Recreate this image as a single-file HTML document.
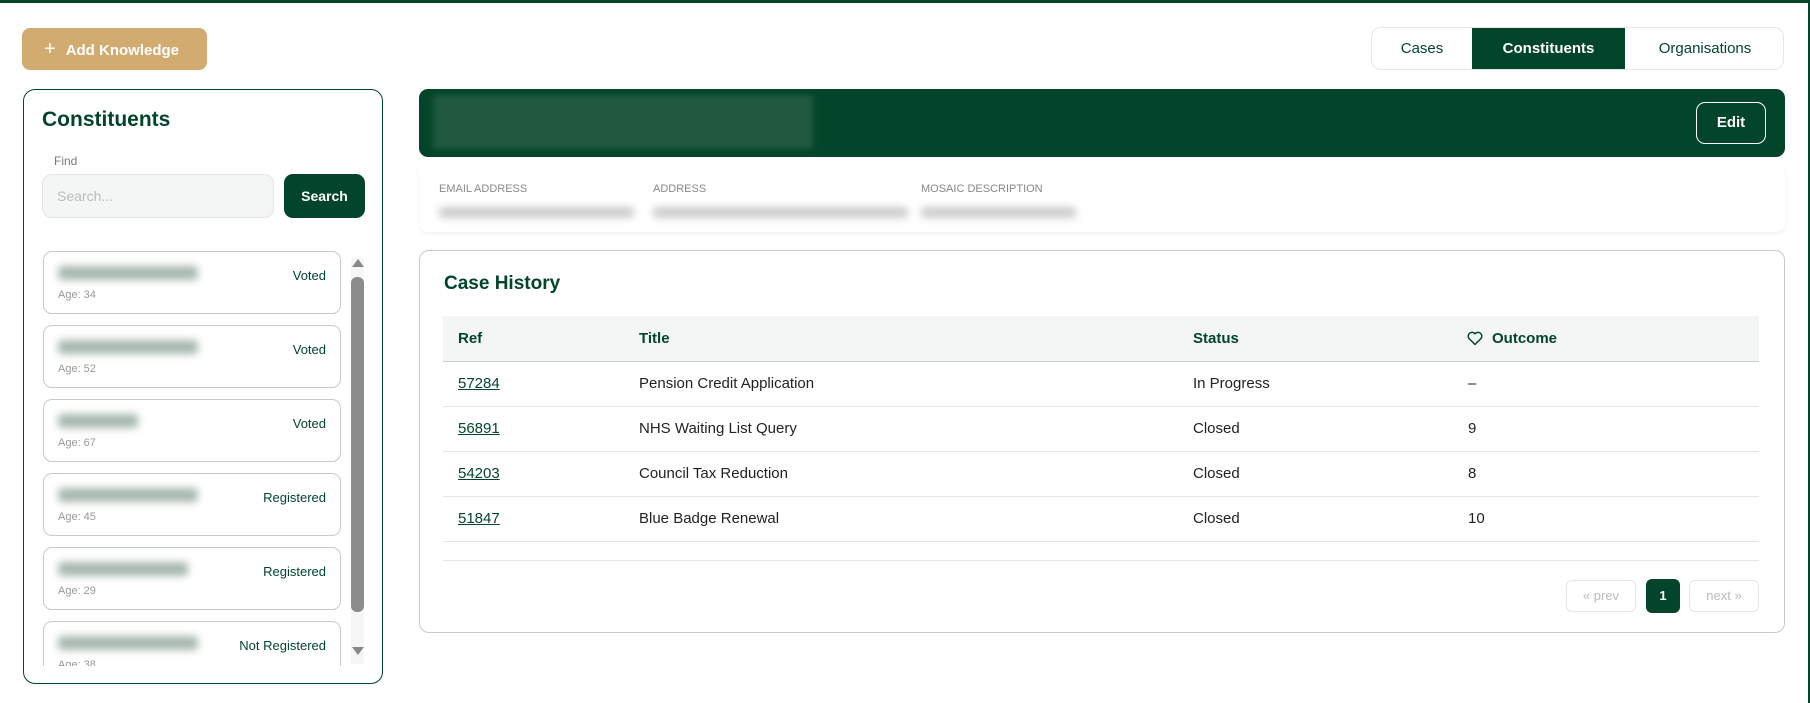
<!DOCTYPE html>
<html><head><style>
*{box-sizing:border-box;margin:0;padding:0}
body{width:1810px;height:703px;background:#fff;font-family:"Liberation Sans",sans-serif;position:relative;overflow:hidden;color:#222}
.a{position:absolute}
.g{color:#03452a}
.blur{position:absolute;background:#a8b8ae;filter:blur(4px);border-radius:4px}
.item{position:absolute;left:43px;width:298px;height:63px;border:1px solid #c4ccc8;border-radius:9px;background:#fff}
.item .st{position:absolute;right:14px;top:16px;font-size:13px;color:#03452a}
.item .age{position:absolute;left:14px;top:37px;font-size:11px;color:#999}
.row{position:absolute;left:443px;width:1316px;height:45px;border-bottom:1px solid #e2e6e4;font-size:15px}
.row span{position:absolute;top:13px}
</style></head><body>
<div class="a" style="left:0;top:0;width:1810px;height:3px;background:#03452a"></div>
<div class="a" style="right:0;top:0;width:2px;height:703px;background:#03452a"></div>

<div class="a" style="left:22px;top:28px;width:185px;height:42px;background:#d2ab70;border-radius:8px;color:#fff;font-weight:bold;font-size:15px;line-height:42px;padding-left:22px"><span style="font-weight:normal;font-size:20px;margin-right:10px">+</span>Add Knowledge</div>

<div class="a" style="left:1371px;top:27px;width:413px;height:43px;border:1px solid #e4e8e6;border-radius:10px;font-size:15px;line-height:41px;overflow:hidden">
<div class="a g" style="left:0;width:100px;text-align:center">Cases</div>
<div class="a" style="left:100px;width:153px;height:43px;background:#03452a;color:#fff;font-weight:bold;text-align:center">Constituents</div>
<div class="a g" style="left:253px;width:160px;text-align:center">Organisations</div>
</div>

<div class="a" style="left:23px;top:89px;width:360px;height:595px;border:1.5px solid #03452a;border-radius:12px"></div>
<div class="a g" style="left:42px;top:108px;font-size:21px;font-weight:bold">Constituents</div>
<div class="a" style="left:54px;top:154px;font-size:12px;color:#777">Find</div>
<div class="a" style="left:42px;top:174px;width:232px;height:44px;background:#f4f6f5;border:1px solid #e2e6e4;border-radius:10px;font-size:14px;color:#bbb;line-height:42px;padding-left:14px">Search...</div>
<div class="a" style="left:284px;top:174px;width:81px;height:44px;background:#03452a;border-radius:9px;color:#fff;font-weight:bold;font-size:14px;line-height:44px;text-align:center">Search</div>

<div class="a" style="left:40px;top:250px;width:330px;height:416px;overflow:hidden">
<div style="position:absolute;left:-40px;top:-250px;width:400px;height:700px">
<div class="item" style="top:251px"><div class="blur" style="left:14px;top:14px;width:140px;height:14px"></div><div class="st">Voted</div><div class="age">Age: 34</div></div>
<div class="item" style="top:325px"><div class="blur" style="left:14px;top:14px;width:140px;height:14px"></div><div class="st">Voted</div><div class="age">Age: 52</div></div>
<div class="item" style="top:399px"><div class="blur" style="left:14px;top:14px;width:80px;height:14px"></div><div class="st">Voted</div><div class="age">Age: 67</div></div>
<div class="item" style="top:473px"><div class="blur" style="left:14px;top:14px;width:140px;height:14px"></div><div class="st">Registered</div><div class="age">Age: 45</div></div>
<div class="item" style="top:547px"><div class="blur" style="left:14px;top:14px;width:130px;height:14px"></div><div class="st">Registered</div><div class="age">Age: 29</div></div>
<div class="item" style="top:621px"><div class="blur" style="left:14px;top:14px;width:140px;height:14px"></div><div class="st">Not Registered</div><div class="age">Age: 38</div></div>
</div></div>
<div class="a" style="left:351px;top:258px;width:13px;height:406px;background:#f6f6f6"></div>
<div class="a" style="left:352px;top:259px;width:0;height:0;border-left:6px solid transparent;border-right:6px solid transparent;border-bottom:8px solid #888"></div>
<div class="a" style="left:351px;top:277px;width:13px;height:335px;background:#8c8c8c;border-radius:6px"></div>
<div class="a" style="left:352px;top:647px;width:0;height:0;border-left:6px solid transparent;border-right:6px solid transparent;border-top:8px solid #888"></div>

<div class="a" style="left:419px;top:89px;width:1366px;height:68px;background:#03452a;border-radius:9px"></div>
<div class="a" style="left:433px;top:95px;width:380px;height:54px;background:#2d6248;filter:blur(3px);opacity:.7"></div>
<div class="a" style="left:1696px;top:102px;width:70px;height:42px;border:1px solid #fff;border-radius:9px;color:#fff;font-weight:bold;font-size:15px;line-height:40px;text-align:center">Edit</div>

<div class="a" style="left:419px;top:165px;width:1366px;height:67px;background:#fff;border-radius:9px;box-shadow:0 2px 4px rgba(0,0,0,.06)"></div>
<div class="a" style="left:439px;top:183px;font-size:11px;color:#888">EMAIL ADDRESS</div>
<div class="a" style="left:653px;top:183px;font-size:11px;color:#888">ADDRESS</div>
<div class="a" style="left:921px;top:183px;font-size:11px;color:#888">MOSAIC DESCRIPTION</div>
<div class="blur" style="left:439px;top:207px;width:195px;height:11px;background:#ccc"></div>
<div class="blur" style="left:653px;top:207px;width:255px;height:11px;background:#ccc"></div>
<div class="blur" style="left:921px;top:207px;width:155px;height:11px;background:#ccc"></div>

<div class="a" style="left:419px;top:250px;width:1366px;height:383px;border:1px solid #c4ccc8;border-radius:10px"></div>
<div class="a g" style="left:444px;top:273px;font-size:19px;font-weight:bold">Case History</div>
<div class="a" style="left:443px;top:316px;width:1316px;height:46px;background:#f4f6f5;border-bottom:1px solid #c9cfcc;font-size:15px;font-weight:bold;color:#03452a">
<span class="a" style="left:15px;top:14px">Ref</span><span class="a" style="left:196px;top:14px">Title</span><span class="a" style="left:750px;top:14px">Status</span>
<svg class="a" style="left:1024px;top:15px" width="16" height="15" viewBox="0 0 24 22"><path d="M12 20 L3 11 A5 5 0 0 1 12 4 A5 5 0 0 1 21 11 Z" fill="none" stroke="#03452a" stroke-width="2.2" stroke-linejoin="round"/></svg>
<span class="a" style="left:1049px;top:14px">Outcome</span></div>
<div class="row" style="top:362px"><span class="g" style="left:15px;text-decoration:underline">57284</span><span style="left:196px">Pension Credit Application</span><span style="left:750px">In Progress</span><span style="left:1025px">–</span></div>
<div class="row" style="top:407px"><span class="g" style="left:15px;text-decoration:underline">56891</span><span style="left:196px">NHS Waiting List Query</span><span style="left:750px">Closed</span><span style="left:1025px">9</span></div>
<div class="row" style="top:452px"><span class="g" style="left:15px;text-decoration:underline">54203</span><span style="left:196px">Council Tax Reduction</span><span style="left:750px">Closed</span><span style="left:1025px">8</span></div>
<div class="row" style="top:497px"><span class="g" style="left:15px;text-decoration:underline">51847</span><span style="left:196px">Blue Badge Renewal</span><span style="left:750px">Closed</span><span style="left:1025px">10</span></div>
<div class="a" style="left:443px;top:560px;width:1316px;height:1px;background:#e2e6e4"></div>
<div class="a" style="left:1566px;top:580px;width:70px;height:32px;border:1px solid #e2e6e4;border-radius:6px;font-size:13px;color:#bbb;text-align:center;line-height:30px">« prev</div>
<div class="a" style="left:1646px;top:579px;width:34px;height:34px;background:#03452a;border-radius:6px;font-size:13px;color:#fff;font-weight:bold;text-align:center;line-height:34px">1</div>
<div class="a" style="left:1689px;top:580px;width:70px;height:32px;border:1px solid #e2e6e4;border-radius:6px;font-size:13px;color:#bbb;text-align:center;line-height:30px">next »</div>
</body></html>
